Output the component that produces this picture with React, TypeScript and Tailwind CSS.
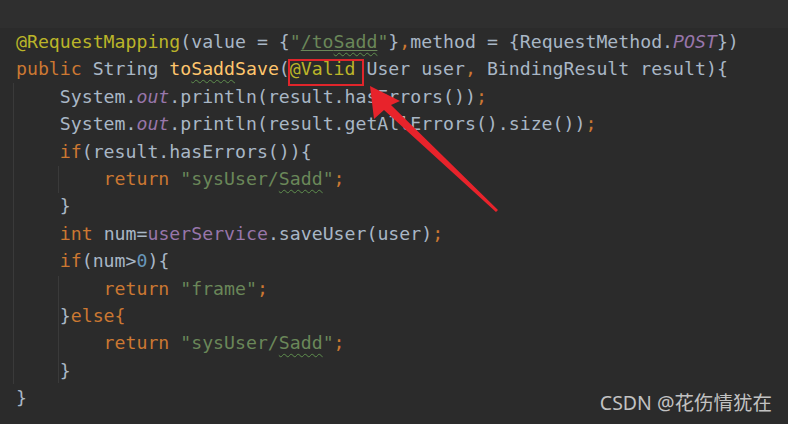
import React from 'react';

const kw = 'text-[#cc7832]';
const an = 'text-[#bbb529]';
const str = 'text-[#6a8759]';
const fld = 'text-[#9876aa] italic';
const wavy =
  'underline decoration-wavy decoration-[#5f8f4e] decoration-1 underline-offset-[4px]';

const Line = ({ children, indent = 0 }: { children?: React.ReactNode; indent?: number }) => (
  <div className="h-[27.4px] leading-[27.4px] whitespace-pre">
    {' '.repeat(indent * 4)}
    {children}
  </div>
);

const Arrow = () => (
  <svg className="absolute left-0 top-0 pointer-events-none" width="788" height="424">
    <polygon
      points="370,86 400,101 391,105 498,210 496,212 384,110 374,119"
      fill="#e8232b"
    />
  </svg>
);

export default function App() {
  return (
    <div className="relative w-[788px] h-[424px] bg-[#2b2b2b] overflow-hidden font-['DejaVu_Sans_Mono',monospace] text-[18.2px] text-[#a9b7c6]">
      <div className="h-[28px] bg-[#2f2f2f]" />

      {/* indent guides */}
      <div className="absolute left-[13px] top-[83px] h-[301px] w-px bg-[#3a3a3a]" />
      <div className="absolute left-[58px] top-[166px] h-[27px] w-px bg-[#3a3a3a]" />
      <div className="absolute left-[58px] top-[276px] h-[107px] w-px bg-[#3a3a3a]" />

      <div className="pl-[16px]">
        <Line>
          <span className={an}>@RequestMapping</span>(value = {'{'}
          <span className={str}>
            "
            <span className="underline decoration-[#6a8759] underline-offset-[2px]">
              /to<span className={wavy}>Sadd</span>
            </span>
            "
          </span>
          {'}'}
          <span className={kw}>,</span>method = {'{'}RequestMethod.
          <span className={fld}>POST</span>
          {'})'}
        </Line>
        <Line>
          <span className={kw}>public </span>String{' '}
          <span className="text-[#ffc66d]">
            to<span className={wavy}>Sadd</span>Save
          </span>
          (
          <span className="relative">
            <span className={an}>@Valid</span>
            <span className="absolute left-[-2px] top-[1px] w-[76px] h-[27px] border-2 border-[#e0252b]" />
          </span>{' '}
          User user<span className={kw}>, </span>BindingResult result){'{'}
        </Line>
        <Line indent={1}>
          System.<span className={fld}>out</span>.println(result.hasErrors())
          <span className={kw}>;</span>
        </Line>
        <Line indent={1}>
          System.<span className={fld}>out</span>.println(result.getAllErrors().size())
          <span className={kw}>;</span>
        </Line>
        <Line indent={1}>
          <span className={kw}>if</span>(result.hasErrors()){'{'}
        </Line>
        <Line indent={2}>
          <span className={kw}>return </span>
          <span className={str}>
            "sysUser/<span className={wavy}>Sadd</span>"
          </span>
          <span className={kw}>;</span>
        </Line>
        <Line indent={1}>{'}'}</Line>
        <Line indent={1}>
          <span className={kw}>int </span>num=<span className="text-[#9876aa]">userService</span>
          .saveUser(user)<span className={kw}>;</span>
        </Line>
        <Line indent={1}>
          <span className={kw}>if</span>(num&gt;<span className="text-[#6897bb]">0</span>){'{'}
        </Line>
        <Line indent={2}>
          <span className={kw}>return </span>
          <span className={str}>"frame"</span>
          <span className={kw}>;</span>
        </Line>
        <Line indent={1}>
          {'}'}
          <span className={kw}>else{'{'}</span>
        </Line>
        <Line indent={2}>
          <span className={kw}>return </span>
          <span className={str}>
            "sysUser/<span className={wavy}>Sadd</span>"
          </span>
          <span className={kw}>;</span>
        </Line>
        <Line indent={1}>{'}'}</Line>
        <div className="flex h-[27.4px] items-center justify-between pr-[16px]">
          <span className="leading-[27.4px]">{'}'}</span>
          <span className="font-['Noto_Sans','Noto_Sans_CJK_SC',sans-serif] text-[19.5px] text-[#c2c2c2] translate-y-[5px]">
            CSDN @花伤情犹在
          </span>
        </div>
      </div>

      <Arrow />
    </div>
  );
}
